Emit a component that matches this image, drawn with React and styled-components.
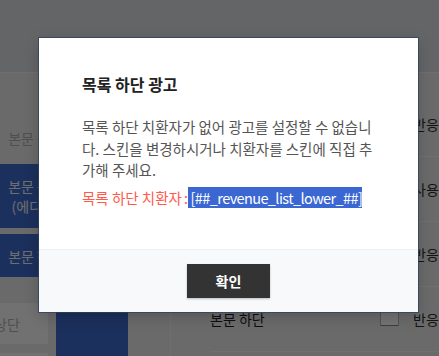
import styled, { createGlobalStyle } from "styled-components";

const GlobalStyle = createGlobalStyle`
  html, body {
    margin: 0;
    padding: 0;
    overflow: hidden;
    font-family: "Noto Sans CJK KR", "Noto Sans", sans-serif;
  }
  * { box-sizing: border-box; }
`;

const rows = [
  { label: "본문 상단", mode: "반응형" },
  { label: "본문 중간 (에디터)", mode: "사용" },
  { label: "본문 중간", mode: "반응형" },
  { label: "본문 하단", mode: "반응형" },
];

export default function App() {
  return (
    <Page>
      <GlobalStyle />
      <Header />
      <Main>
        <LeftPanel>
          <Menu>
            <MenuItem>본문 상단</MenuItem>
            <MenuItem $active $tall>
              본문 중간
              <br />
              (에디터)
            </MenuItem>
            <MenuItem $active>본문 하단</MenuItem>
          </Menu>
          <Preview>
            <PreviewCards>
              <PreviewCard>상단</PreviewCard>
              <PreviewCard>하단</PreviewCard>
            </PreviewCards>
            <PreviewBlock />
          </Preview>
        </LeftPanel>
        <Table>
          {rows.map((r) => (
            <Row key={r.label}>
              <RowLabel>{r.label}</RowLabel>
              <Check />
              <RowMode>{r.mode}</RowMode>
            </Row>
          ))}
        </Table>
      </Main>

      <Overlay>
        <Modal>
          <ModalBody>
            <Title>목록 하단 광고</Title>
            <Desc>
              목록 하단 치환자가 없어 광고를 설정할 수 없습니다. 스킨을
              변경하시거나 치환자를 스킨에 직접 추가해 주세요.
            </Desc>
            <Note>
              목록 하단 치환자<Colon>:</Colon>
              <Code> [##_revenue_list_lower_##]</Code>
            </Note>
          </ModalBody>
          <ModalFooter>
            <ConfirmButton>확인</ConfirmButton>
          </ModalFooter>
        </Modal>
      </Overlay>
    </Page>
  );
}

const Page = styled.div`
  position: relative;
  width: 439px;
  height: 356px;
  overflow: hidden;
  background: #ececec;
`;

const Header = styled.div`
  height: 73px;
  background: #dedfe2;
  border-bottom: 1px solid #f6f6f6;
`;

const Main = styled.div`
  display: flex;
`;

const LeftPanel = styled.div`
  width: 170px;
  flex-shrink: 0;
  padding-top: 45px;
`;

const Menu = styled.div`
  width: 71px;
  display: flex;
  flex-direction: column;
  gap: 6px;
`;

const MenuItem = styled.div`
  height: ${(p) => (p.$tall ? "64px" : p.$active ? "43px" : "40px")};
  display: flex;
  align-items: center;
  justify-content: center;
  text-align: center;
  font-size: 14px;
  line-height: 20px;
  color: ${(p) => (p.$active ? "#f2f4f8" : "#b0b0b0")};
  background: ${(p) => (p.$active ? "#3c6bcc" : "transparent")};
`;

const Preview = styled.div`
  display: flex;
  gap: 8px;
  margin-top: 26px;
`;

const PreviewCards = styled.div`
  width: 48px;
  display: flex;
  flex-direction: column;
  gap: 9px;
`;

const PreviewCard = styled.div`
  height: 41px;
  background: #fbfbfb;
  font-size: 14px;
  color: #b0b0b0;
  display: flex;
  align-items: center;
  text-indent: -6px;
`;

const PreviewBlock = styled.div`
  width: 72px;
  height: 120px;
  background: #3c6bcc;
`;

const Table = styled.div`
  flex: 1;
  min-width: 300px;
  border-left: 1px solid #f6f6f6;
  padding: 19px 0 0 39px;
  height: 300px;
`;

const Row = styled.div`
  display: grid;
  grid-template-columns: 170px 20px auto;
  align-items: center;
  height: 65px;
  border-bottom: 1px solid #f8f8f8;
  width: 320px;
`;

const RowLabel = styled.span`
  font-size: 14px;
  color: #1e1e1e;
`;

const Check = styled.span`
  width: 19px;
  height: 20px;
  margin-top: -6px;
  border: 1px solid #b8b8b8;
  border-bottom-color: #888;
  background: #fff;
`;

const RowMode = styled.span`
  padding-left: 13px;
  font-size: 14px;
  color: #2c2c2c;
  white-space: nowrap;
`;

const Overlay = styled.div`
  position: absolute;
  inset: 0;
  background: rgba(0, 0, 0, 0.55);
  padding: 38px 0 0 39px;
`;

const Modal = styled.div`
  width: 379px;
  background: #fff;
  box-shadow: 0 0 0 1px rgba(45, 65, 95, 0.75), 0 4px 14px rgba(0, 0, 0, 0.2);
`;

const ModalBody = styled.div`
  padding: 34px 38px 41px 43px;
`;

const Title = styled.h2`
  margin: 0 0 20px;
  font-size: 16px;
  line-height: 24px;
  font-weight: 700;
  color: #222;
`;

const Desc = styled.p`
  margin: 0;
  font-size: 14.5px;
  line-height: 21.5px;
  color: #555;
`;

const Note = styled.p`
  margin: 6px 0 0;
  font-size: 14.5px;
  line-height: 21.5px;
  color: #ff5a4a;
`;

const Colon = styled.span`
  margin-left: 2px;
`;

const Code = styled.span`
  background: #3a67d2;
  color: #fff;
  letter-spacing: -0.6px;
  white-space: pre;
`;

const ModalFooter = styled.div`
  display: flex;
  justify-content: center;
  padding: 14px 0;
  background: #f8f9fb;
  border-top: 1px solid #eceef1;
`;

const ConfirmButton = styled.button`
  width: 83px;
  height: 34px;
  border: 0;
  background: #333;
  color: #fff;
  font-family: inherit;
  font-size: 14px;
  font-weight: 700;
  box-shadow: 0 1px 2px rgba(0, 0, 0, 0.25);
  cursor: pointer;
`;
